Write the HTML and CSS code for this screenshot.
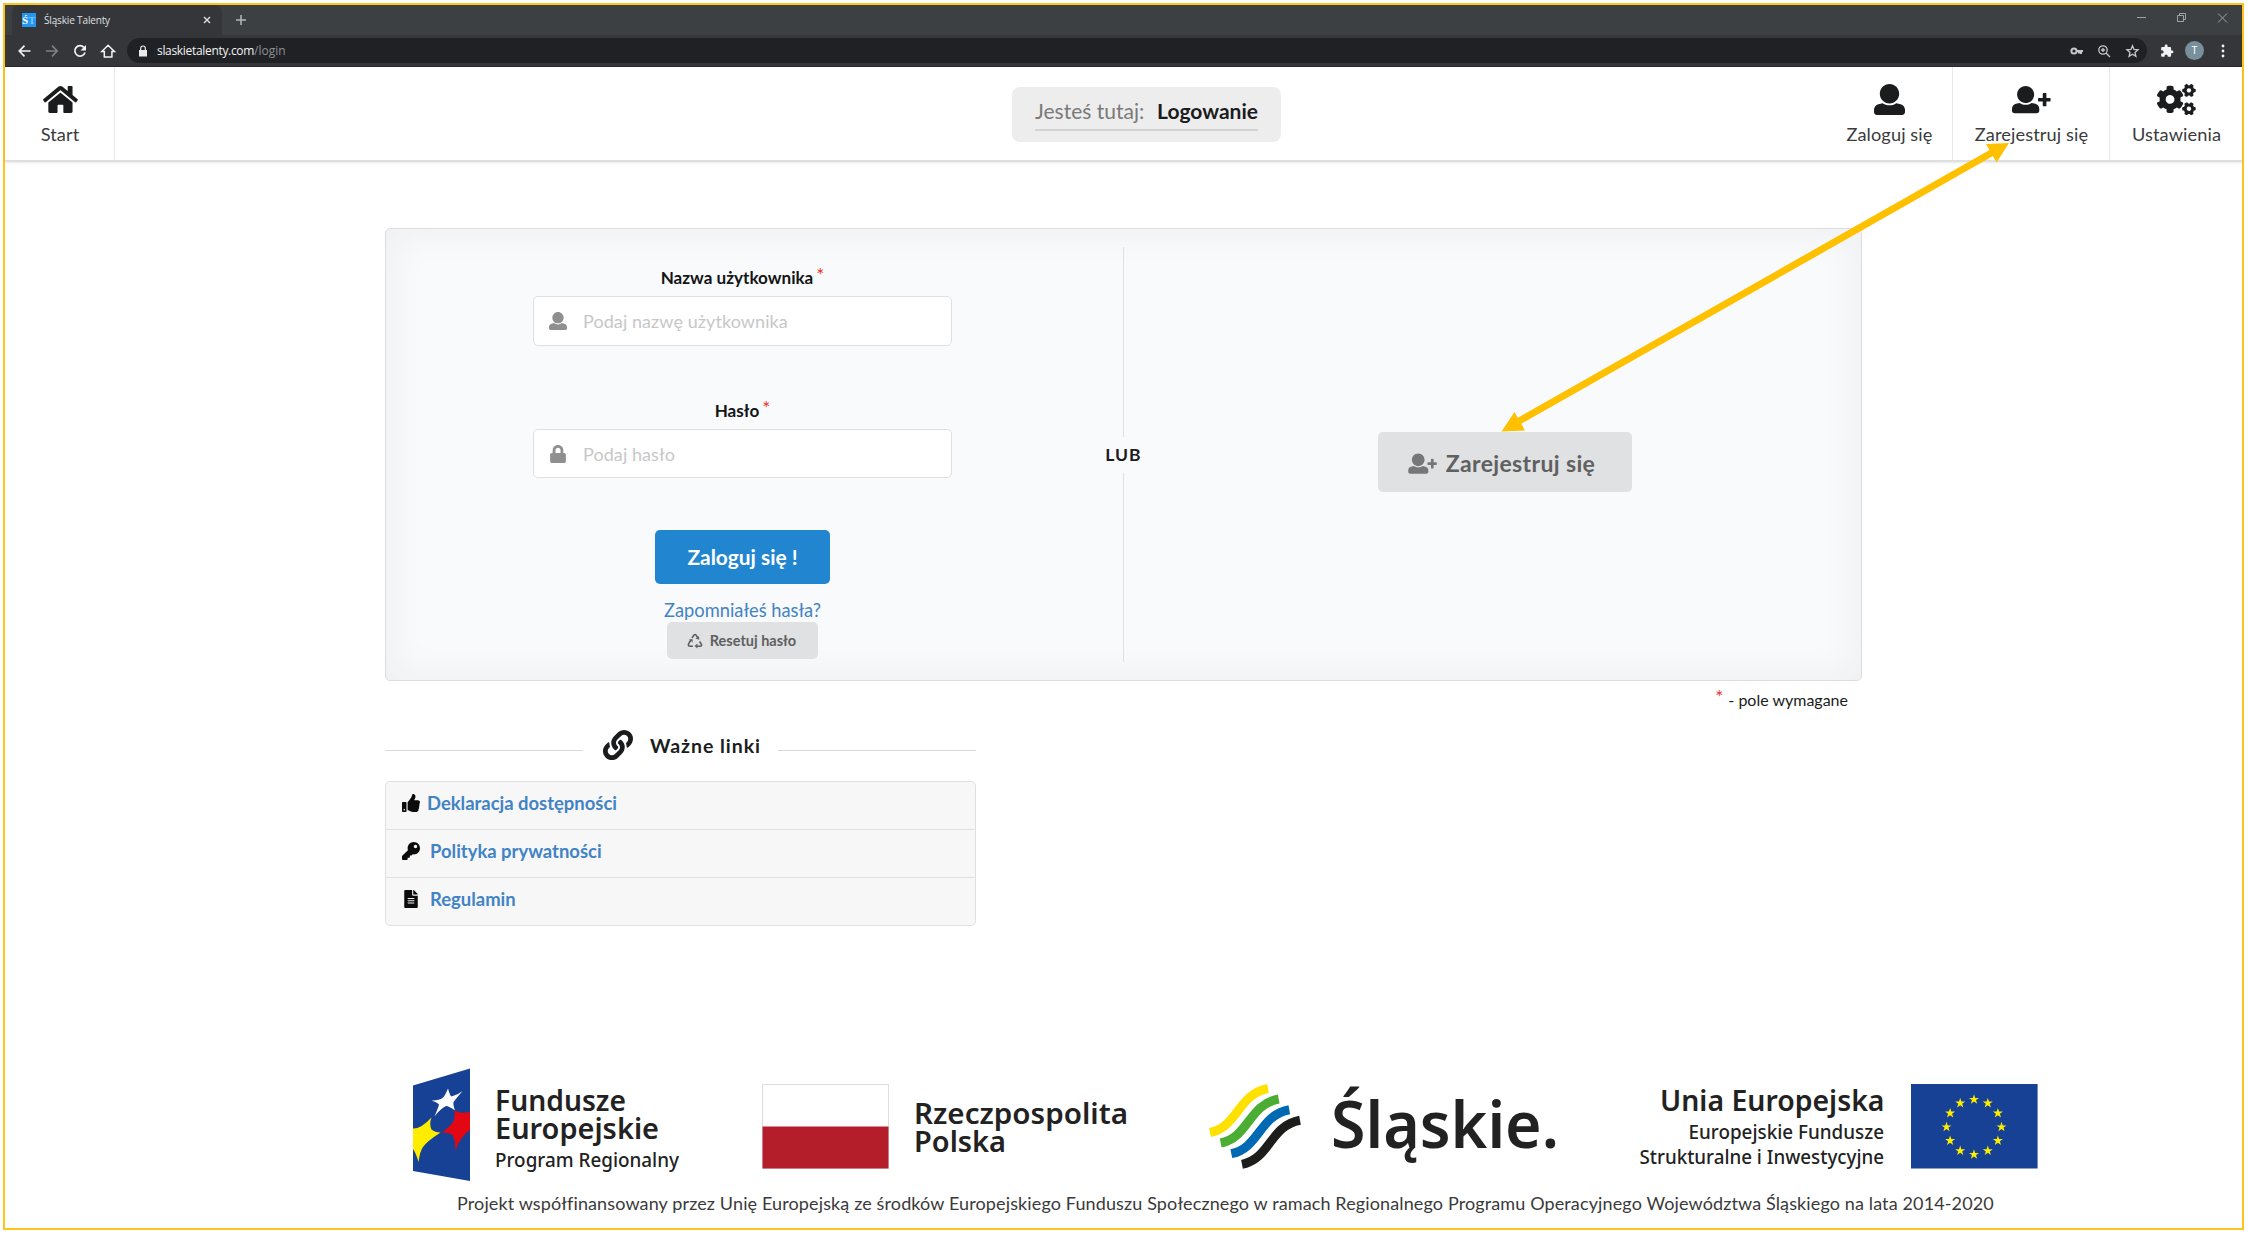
FILE: index.html
```html
<!DOCTYPE html>
<html lang="pl">
<head>
<meta charset="utf-8">
<title>Śląskie Talenty</title>
<link rel="stylesheet" href="styles.css">
</head>
<body>
<svg class="defs" width="0" height="0">
  <defs>
    <symbol id="user" viewBox="0 0 512 512"><path d="M256 0c88.366 0 160 71.634 160 160s-71.634 160-160 160S96 248.366 96 160 167.634 0 256 0zm183.283 333.821l-71.313-17.828c-74.923 53.89-165.738 41.864-223.94 0l-71.313 17.828C29.981 344.505 0 382.903 0 426.955V464c0 26.51 21.49 48 48 48h416c26.51 0 48-21.49 48-48v-37.045c0-44.052-29.981-82.45-72.717-93.134z"/></symbol>
    <symbol id="user-plus" viewBox="0 0 640 512"><path transform="translate(0 34) scale(.88)" d="M256 0c88.366 0 160 71.634 160 160s-71.634 160-160 160S96 248.366 96 160 167.634 0 256 0zm183.283 333.821l-71.313-17.828c-74.923 53.89-165.738 41.864-223.94 0l-71.313 17.828C29.981 344.505 0 382.903 0 426.955V464c0 26.51 21.49 48 48 48h416c26.51 0 48-21.49 48-48v-37.045c0-44.052-29.981-82.45-72.717-93.134z"/><path d="M508 160q0-10 10-10h40q10 0 10 10v70h62q10 0 10 10v38q0 10-10 10h-62v70q0 10-10 10h-40q-10 0-10-10v-70h-68q-10 0-10-10v-38q0-10 10-10h68z"/></symbol>
    <path id="small-cog" d="M512.1 191l-8.2 14.3c-3 5.3-9.4 7.5-15.1 5.4-11.8-4.4-22.6-10.7-32.1-18.6-4.6-3.8-5.8-10.5-2.8-15.7l8.2-14.3c-6.9-8-12.3-17.3-15.9-27.4h-16.5c-6 0-11.2-4.3-12.2-10.3-2-12-2.1-24.6 0-37.1 1-6 6.2-10.4 12.2-10.4h16.5c3.6-10.1 9-19.4 15.9-27.4l-8.2-14.3c-3-5.2-1.9-11.9 2.8-15.7 9.5-7.9 20.4-14.2 32.1-18.6 5.7-2.1 12.1.1 15.1 5.4l8.2 14.3c10.5-1.9 21.2-1.9 31.7 0L552 6.3c3-5.3 9.4-7.5 15.1-5.4 11.8 4.4 22.6 10.7 32.1 18.6 4.6 3.8 5.8 10.5 2.8 15.7l-8.2 14.3c6.9 8 12.3 17.3 15.9 27.4h16.5c6 0 11.2 4.3 12.2 10.3 2 12 2.1 24.6 0 37.1-1 6-6.2 10.4-12.2 10.4h-16.5c-3.6 10.1-9 19.4-15.9 27.4l8.2 14.3c3 5.2 1.9 11.9-2.8 15.7-9.5 7.9-20.4 14.2-32.1 18.6-5.7 2.1-12.1-.1-15.1-5.4l-8.2-14.3c-10.4 1.9-21.2 1.9-31.7 0zm-10.5-58.8c38.5 29.6 82.4-14.3 52.8-52.8-38.5-29.7-82.4 14.3-52.8 52.8z"/>
    <path id="star" d="M0-5.200 1.200-1.600H5L2 .6 3.100 4.200 0 2-3.100 4.200-2 .6-5-1.600H-1.200z"/>
  </defs>
</svg>

<div class="window">
  <div class="tabstrip">
    <div class="tab">
      <span class="favicon">Ś<span class="favicon-t">T</span></span>
      <span class="tab-title">Śląskie Talenty</span>
      <svg class="tab-close" viewBox="0 0 8 8"><path d="M1 1l6 6M7 1L1 7"/></svg>
    </div>
    <svg class="new-tab" viewBox="0 0 12 12"><path d="M6 1v10M1 6h10"/></svg>
    <svg class="win-btns" viewBox="0 0 92 12"><path d="M1 5.500h9M41.500 3.500h6v6h-6zM43.500 3.500v-2h6v6h-2M82 1.500l9 9M91 1.500l-9 9"/></svg>
  </div>

  <div class="toolbar">
    <svg class="nav-icons" viewBox="0 0 100 16">
      <g fill="none" stroke="#f1f3f4" stroke-width="1.700">
        <path d="M13.500 8H2.500M7.500 2.700L2.300 8l5.200 5.300"/>
        <path stroke="#7d8084" d="M29 8h11M35 2.700L40.200 8 35 13.300"/>
        <path d="M67 4.500A5.200 5.200 0 1 0 68 9.500"/>
        <path d="M84.800 8.500h2.500v5.500h7.600V8.500h2.500L91.100 2.300z" stroke-width="1.500"/>
      </g>
      <path fill="#f1f3f4" d="M69 2v5.500h-5.500z"/>
    </svg>
    <div class="omnibox">
      <svg class="url-lock" viewBox="0 0 10 12"><path d="M1 5h8v6.500H1z" fill="#e8eaed"/><path d="M2.700 5V3.300a2.300 2.300 0 0 1 4.600 0V5" fill="none" stroke="#e8eaed" stroke-width="1.200"/></svg>
      <span class="url"><b>slaskietalenty.com</b><span>/login</span></span>
      <svg class="omni-icons" viewBox="0 0 70 14">
        <g fill="none" stroke="#c6c8cb" stroke-width="1.500">
          <circle cx="4" cy="7" r="2.600" stroke-width="2"/><path d="M6.500 7H13M11 7v3M9 7v2.500" stroke-width="2"/>
          <circle cx="33" cy="6" r="4.200" stroke-width="1.300"/><path d="M36 9l4 4M31 6h4M33 4v4" stroke-width="1.300"/>
          <path stroke-width="1.300" d="M62.500 1.800l1.500 3.700 4 .3-3 2.600.9 3.900-3.400-2.100-3.400 2.100.9-3.900-3-2.600 4-.3z"/>
        </g>
      </svg>
    </div>
    <svg class="puzzle" viewBox="0 0 24 24"><path d="M20.500 11H19V7c0-1.100-.9-2-2-2h-4V3.500a2.500 2.500 0 0 0-5 0V5H4c-1.100 0-2 .9-2 2v3.800h1.500a2.700 2.700 0 0 1 0 5.400H2V20c0 1.100.9 2 2 2h3.800v-1.500a2.700 2.700 0 0 1 5.400 0V22H17c1.100 0 2-.9 2-2v-4h1.500a2.500 2.500 0 0 0 0-5z"/></svg>
    <span class="avatar">T</span>
    <svg class="dots" viewBox="0 0 4 14"><circle cx="2" cy="2" r="1.400"/><circle cx="2" cy="7" r="1.400"/><circle cx="2" cy="12" r="1.400"/></svg>
  </div>

  <header class="nav">
    <a class="nav-item nav-start">
      <svg class="icon" viewBox="0 0 576 512"><path d="M488 312.700V456c0 13.300-10.700 24-24 24H348c-6.600 0-12-5.400-12-12V356c0-6.600-5.400-12-12-12h-72c-6.600 0-12 5.400-12 12v112c0 6.600-5.400 12-12 12H112c-13.300 0-24-10.700-24-24V312.700c0-3.600 1.600-7 4.400-9.300l188-154.800c4.400-3.600 10.800-3.600 15.300 0l188 154.800c2.700 2.300 4.300 5.700 4.300 9.300zm83.600-60.900L488 182.900V44.400c0-6.600-5.400-12-12-12h-56c-6.600 0-12 5.400-12 12V117l-89.500-73.700c-17.700-14.600-43.300-14.600-61 0L4.400 251.800c-5.100 4.200-5.800 11.800-1.600 16.900l25.500 31c4.200 5.100 11.800 5.800 16.900 1.600l235.200-193.700c4.400-3.600 10.800-3.600 15.300 0l235.200 193.700c5.100 4.200 12.700 3.500 16.900-1.600l25.500-31c4.200-5.200 3.400-12.700-1.700-16.900z"/></svg>
      <span>Start</span>
    </a>
    <div class="crumb"><div class="crumb-line"><span class="crumb-label">Jesteś tutaj:</span><strong>Logowanie</strong></div></div>
    <a class="nav-item nav-login"><svg class="icon" viewBox="0 0 512 512"><use href="#user"/></svg><span>Zaloguj się</span></a>
    <a class="nav-item nav-register"><svg class="icon" viewBox="0 0 640 512"><use href="#user-plus"/></svg><span>Zarejestruj się</span></a>
    <a class="nav-item nav-settings">
      <svg class="icon" viewBox="0 0 640 512"><use href="#small-cog"/><use href="#small-cog" y="303"/><path d="M386.300 286.100l33.700 16.800c10.100 5.800 14.500 18.100 10.500 29.100-8.900 24.200-26.400 46.400-42.600 65.800-7.400 8.900-20.200 11.100-30.300 5.300l-29.100-16.800c-16 13.700-34.600 24.600-54.900 31.700v33.600c0 11.600-8.300 21.600-19.700 23.600-24.600 4.200-50.400 4.400-75.900 0-11.500-2-20-11.900-20-23.600V418c-20.300-7.200-38.900-18-54.900-31.700L74 403c-10 5.800-22.900 3.600-30.300-5.300-16.200-19.400-33.300-41.600-42.200-65.700-4-10.900.4-23.200 10.500-29.100l33.300-16.800c-3.900-20.900-3.900-42.400 0-63.400L12 205.800c-10.100-5.800-14.600-18.100-10.500-29 8.900-24.200 26-46.400 42.200-65.800 7.400-8.900 20.200-11.100 30.300-5.300l29.100 16.800c16-13.700 34.600-24.600 54.900-31.700V57.100c0-11.500 8.200-21.500 19.600-23.500 24.600-4.200 50.500-4.400 76-.1 11.500 2 20 11.900 20 23.600v33.600c20.300 7.200 38.900 18 54.900 31.700l29.100-16.800c10-5.800 22.900-3.600 30.300 5.300 16.200 19.400 33.200 41.600 42.100 65.800 4 10.900.1 23.200-10 29.100l-33.700 16.800c3.900 21 3.900 42.500 0 63.500zm-117.600 21.100c59.200-77-28.700-164.900-105.700-105.700-59.200 77 28.700 164.900 105.700 105.700z"/></svg>
      <span>Ustawienia</span>
    </a>
  </header>

  <main class="content">
    <section class="panel">
      <form class="login">
        <div class="label"><span>Nazwa użytkownika</span><i>*</i></div>
        <div class="input"><svg viewBox="0 0 512 512"><use href="#user"/></svg><span>Podaj nazwę użytkownika</span></div>
        <div class="label label-pass"><span>Hasło</span><i>*</i></div>
        <div class="input input-pass"><svg viewBox="-32 0 512 512"><path d="M400 224h-24v-72C376 68.200 307.800 0 224 0S72 68.200 72 152v72H48c-26.500 0-48 21.500-48 48v192c0 26.500 21.500 48 48 48h352c26.500 0 48-21.500 48-48V272c0-26.500-21.500-48-48-48zm-104 0H152v-72c0-39.700 32.300-72 72-72s72 32.300 72 72v72z"/></svg><span>Podaj hasło</span></div>
        <div class="btn btn-login"><span>Zaloguj się !</span></div>
        <a class="forgot">Zapomniałeś hasła?</a>
        <div class="btn btn-reset">
          <svg viewBox="0 0 16 16"><g fill="none" stroke="currentColor" stroke-width="1.600"><path d="M5 5L7 2Q8 .9 9 2l2 3.200M3.800 7L1.500 11Q.9 13 3 13.200h3M12.600 8.500L14.500 11.500Q15 13.200 13 13.200H9"/></g><path fill="currentColor" d="M12.300 6.800L8.500 5.500l3.500-2.300zM2 6.500l3.400-.6.500 3.600zM10.500 10.600v5l-3-2.500z"/></svg>
          <span>Resetuj hasło</span>
        </div>
      </form>
      <div class="or"><span>LUB</span></div>
      <div class="signup">
        <div class="btn btn-register"><svg viewBox="0 0 640 512"><use href="#user-plus"/></svg><span>Zarejestruj się</span></div>
      </div>
    </section>
    <p class="required"><i>*</i><span>- pole wymagane</span></p>

    <section class="links">
      <h4 class="links-title">
        <svg viewBox="0 0 512 512"><path d="M326.612 185.391c59.747 59.809 58.927 155.698.36 214.590-.11.12-.24.25-.36.37l-67.200 67.200c-59.270 59.270-155.699 59.262-214.960 0-59.270-59.260-59.270-155.700 0-214.960l37.106-37.106c9.840-9.840 26.786-3.300 27.294 10.606.648 17.722 3.826 35.527 9.690 52.721 1.986 5.822.567 12.262-3.783 16.612l-13.087 13.087c-28.026 28.026-28.905 73.660-1.155 101.960 28.024 28.579 74.086 28.749 102.325.51l67.200-67.190c28.191-28.191 28.073-73.757 0-101.830-3.701-3.694-7.429-6.564-10.341-8.569a16.037 16.037 0 0 1-6.947-12.606c-.396-10.567 3.348-21.456 11.698-29.806l21.054-21.055c5.521-5.521 14.182-6.199 20.584-1.731a152.482 152.482 0 0 1 20.522 17.197zM467.547 44.449c-59.261-59.262-155.690-59.270-214.960 0l-67.200 67.200c-.12.12-.25.25-.36.37-58.566 58.892-59.387 154.781.36 214.590a152.454 152.454 0 0 0 20.521 17.196c6.402 4.468 15.064 3.789 20.584-1.731l21.054-21.055c8.350-8.350 12.094-19.239 11.698-29.806a16.037 16.037 0 0 0-6.947-12.606c-2.912-2.005-6.640-4.875-10.341-8.569-28.073-28.073-28.191-73.639 0-101.830l67.200-67.190c28.239-28.239 74.300-28.069 102.325.51 27.750 28.300 26.872 73.934-1.155 101.960l-13.087 13.087c-4.350 4.350-5.769 10.790-3.783 16.612 5.864 17.194 9.042 34.999 9.690 52.721.509 13.906 17.454 20.446 27.294 10.606l37.106-37.106c59.271-59.259 59.271-155.699.001-214.959z"/></svg>
        <span>Ważne linki</span>
      </h4>
      <nav class="menu">
        <a class="menu-row tight"><svg viewBox="0 0 512 512"><path d="M104 224H24c-13.255 0-24 10.745-24 24v240c0 13.255 10.745 24 24 24h80c13.255 0 24-10.745 24-24V248c0-13.255-10.745-24-24-24zM64 472c-13.255 0-24-10.745-24-24s10.745-24 24-24 24 10.745 24 24-10.745 24-24 24zM384 81.452c0 42.416-25.970 66.208-33.277 94.548h101.723c33.397 0 59.397 27.746 59.553 58.098.084 17.938-7.546 37.249-19.439 49.197l-.11.11c9.836 23.337 8.237 56.037-9.308 79.469 8.681 25.895-.069 57.704-16.382 74.757 4.298 17.598 2.244 32.575-6.148 44.632C440.202 511.587 389.616 512 346.839 512l-2.845-.001c-48.287-.017-87.806-17.598-119.560-31.725-15.957-7.099-36.821-15.887-52.651-16.178-6.540-.12-11.783-5.457-11.783-11.998v-213.770c0-3.200 1.282-6.271 3.558-8.521 39.614-39.144 56.648-80.587 89.117-113.111 14.804-14.832 20.188-37.236 25.393-58.902C282.515 39.293 291.817 0 312 0c24 0 72 8 72 81.452z"/></svg><span>Deklaracja dostępności</span></a>
        <a class="menu-row"><svg viewBox="0 0 512 512"><path d="M512 176.001C512 273.203 433.202 352 336 352c-11.220 0-22.190-1.062-32.827-3.069l-24.012 27.014A23.999 23.999 0 0 1 261.223 384H224v40c0 13.255-10.745 24-24 24h-40v40c0 13.255-10.745 24-24 24H24c-13.255 0-24-10.745-24-24v-78.059c0-6.365 2.529-12.470 7.029-16.971l161.802-161.802C163.108 213.814 160 195.271 160 176 160 78.798 238.797.001 335.999 0 433.488-.001 512 78.511 512 176.001zM336 128c0 26.510 21.490 48 48 48s48-21.490 48-48-21.490-48-48-48-48 21.490-48 48z"/></svg><span>Polityka prywatności</span></a>
        <a class="menu-row"><svg viewBox="-64 0 512 512"><path d="M224 136V0H24C10.700 0 0 10.700 0 24v464c0 13.300 10.700 24 24 24h336c13.300 0 24-10.700 24-24V160H248c-13.200 0-24-10.800-24-24zm64 236c0 6.600-5.400 12-12 12H108c-6.600 0-12-5.400-12-12v-8c0-6.600 5.400-12 12-12h168c6.600 0 12 5.400 12 12v8zm0-64c0 6.600-5.400 12-12 12H108c-6.600 0-12-5.400-12-12v-8c0-6.600 5.400-12 12-12h168c6.600 0 12 5.400 12 12v8zm0-72v8c0 6.600-5.400 12-12 12H108c-6.600 0-12-5.400-12-12v-8c0-6.600 5.400-12 12-12h168c6.600 0 12 5.400 12 12zm96-114.100v6.100H256V0h6.100c6.400 0 12.500 2.500 17 7l97.900 98c4.500 4.500 7 10.600 7 16.900z"/></svg><span>Regulamin</span></a>
      </nav>
    </section>
  </main>

  <footer>
    <div class="logos">
      <svg class="logo-fe" width="270" height="114" viewBox="413 1068 270 114">
        <path fill="#164194" d="M413 1085.500L470 1068.500V1181L413 1171z"/>
        <path fill="#fff" d="M448 1088.500Q450 1096 451.500 1096.500Q458 1095 462.500 1091Q455 1100 453.500 1102Q453 1105 455 1110.500Q449 1106 446 1106Q440 1109 434.500 1116.500Q438.500 1107 439 1104.500Q437.500 1102.500 431.500 1100.800Q440 1100 442.500 1098Q445 1096 448 1088.500z"/>
        <path fill="#ffed00" d="M413 1128.500Q421 1129 431.500 1117.500Q429 1124 431.500 1129.500Q435 1132.500 440.500 1132.500Q426 1142 423 1147Q420 1151 418.500 1162Q416 1153 413 1149z"/>
        <path fill="#e30613" d="M470 1112Q459 1114 454.500 1110Q455 1119 453 1122Q448 1129 441 1132.500Q448 1132 452 1134.500Q455.500 1139 455.500 1151Q459 1138 470 1130z"/>
        <g class="logo-text"><text class="b" x="495" y="1111" font-size="28.500" textLength="131" lengthAdjust="spacingAndGlyphs">Fundusze</text><text class="b" x="495" y="1139" font-size="28.500" textLength="164" lengthAdjust="spacingAndGlyphs">Europejskie</text><text class="m" x="495" y="1167" font-size="19.500" textLength="184" lengthAdjust="spacingAndGlyphs">Program Regionalny</text></g>
      </svg>
      <svg class="logo-pl" width="370" height="86" viewBox="761 1084 370 86">
        <path fill="#fff" stroke="#dcdcdc" d="M762.500 1084.500h126v84h-126z"/><path fill="#b41e2a" d="M762.500 1126.500h126v42h-126z"/>
        <g class="logo-text"><text class="b" x="914" y="1124" font-size="28.500" textLength="214" lengthAdjust="spacingAndGlyphs">Rzeczpospolita</text><text class="b" x="914" y="1152" font-size="28.500" textLength="92" lengthAdjust="spacingAndGlyphs">Polska</text></g>
      </svg>
      <svg class="logo-sl" width="350" height="90" viewBox="1209 1082 350 90">
        <g fill="none" stroke-width="9"><path stroke="#ffe100" d="M1210 1132.500C1238 1127 1238 1094 1268 1088.500"/><path stroke="#4bad33" d="M1220.700 1143C1248.700 1137.500 1248.700 1104.500 1278.700 1099"/><path stroke="#0069b4" d="M1231.300 1153.700C1259.300 1148.200 1259.300 1115.200 1289.300 1109.700"/><path stroke="#1d1d1b" d="M1242 1164.300C1270 1158.800 1270 1125.800 1300 1120.300"/></g>
        <g class="logo-text"><text class="b" x="1331" y="1147.500" font-size="65" textLength="228" lengthAdjust="spacingAndGlyphs">Śląskie.</text></g>
      </svg>
      <svg class="logo-ue" width="400" height="86" viewBox="1638 1084 400 86">
        <g class="logo-text"><text class="b" x="1660" y="1111" font-size="28.500" textLength="224.500" lengthAdjust="spacingAndGlyphs">Unia Europejska</text><text class="m" x="1688.500" y="1139" font-size="19.500" textLength="195.500" lengthAdjust="spacingAndGlyphs">Europejskie Fundusze</text><text class="m" x="1639.500" y="1164" font-size="19.500" textLength="244.500" lengthAdjust="spacingAndGlyphs">Strukturalne i Inwestycyjne</text></g>
        <path fill="#164194" d="M1911 1084h126.600v84.500H1911z"/>
        <g fill="#ffed00"><use href="#star" x="1974" y="1099.500"/><use href="#star" x="1987.800" y="1103.200"/><use href="#star" x="1997.900" y="1113.200"/><use href="#star" x="2001.500" y="1127"/><use href="#star" x="1997.900" y="1140.700"/><use href="#star" x="1987.800" y="1150.800"/><use href="#star" x="1974" y="1154.500"/><use href="#star" x="1960.200" y="1150.800"/><use href="#star" x="1950.100" y="1140.700"/><use href="#star" x="1946.500" y="1127"/><use href="#star" x="1950.100" y="1113.200"/><use href="#star" x="1960.200" y="1103.200"/></g>
      </svg>
    </div>
    <p class="project"><span>Projekt współfinansowany przez Unię Europejską ze środków Europejskiego Funduszu Społecznego w ramach Regionalnego Programu Operacyjnego Województwa Śląskiego na lata 2014-2020</span></p>
  </footer>
</div>

<svg class="arrow" width="520" height="300" viewBox="1495 138 520 300"><path fill="none" stroke="#ffc000" stroke-width="7" d="M1517 422.200L1993.500 151.800"/><path fill="#ffc000" d="M1501.500 431.500L1514.500 412 1525 430.500zM2009 143L1986 144 1996.600 162.500z"/></svg>
</body>
</html>
```
FILE: styles.css
```css
* { box-sizing: border-box; }
body { margin: 0; background: #fff; font-family: Lato, sans-serif; font-size: 18px; line-height: 24px; color: #1b1c1d; }
svg { display: block; flex: none; overflow: visible; }
p, h4 { margin: 0; }
i { font-style: normal; }
span, strong, a, b { white-space: nowrap; }
.defs { position: absolute; }

.window { width: 2241px; height: 1227px; margin: 3px 0 0 3px; border: 2px solid #ffc31a; background: #fff; display: flex; flex-direction: column; }

.tabstrip { height: 30px; background: #3d4043; display: flex; align-items: center; font-family: "Open Sans", sans-serif; }
.tab { width: 210px; height: 30px; margin-left: 7px; padding: 0 11px 0 10px; background: #35363a; border-radius: 7px 7px 0 0; display: flex; align-items: center; }
.favicon { width: 14px; height: 14px; background: #2196f3; color: #fff; font: bold 11px/14px "Liberation Serif", serif; }
.favicon-t { color: #7cc4fb; }
.tab-title { margin-left: 8px; font-size: 10px; letter-spacing: -.15px; color: #dfe1e5; flex: 1; }
.tab-close { width: 8px; height: 8px; fill: none; stroke: #dfe1e5; stroke-width: 1.4; }
.new-tab { width: 12px; height: 12px; margin-left: 13px; fill: none; stroke: #b5b8bb; stroke-width: 1.5; }
.win-btns { width: 92px; height: 12px; margin: 0 14px 5px auto; fill: none; stroke: #a0a3a5; stroke-width: 1; }

.toolbar { height: 32px; background: #35363a; border-bottom: 1px solid #292a2d; display: flex; align-items: center; }
.nav-icons { width: 100px; height: 16px; margin-left: 12px; }
.omnibox { width: 2020px; height: 25px; margin-left: 10px; padding: 0 7px 0 11px; border-radius: 13px; background: #202124; display: flex; align-items: center; font-family: "Open Sans", sans-serif; font-size: 12px; color: #8d9195; }
.url-lock { width: 10px; height: 12px; }
.url { margin-left: 9px; flex: 1; line-height: 22px; }
.url b { font-weight: normal; letter-spacing: -.32px; color: #f1f3f4; }
.omni-icons { width: 70px; height: 14px; }
.puzzle { width: 14px; height: 14px; margin-left: 13px; fill: #f1f3f4; }
.avatar { width: 19px; height: 19px; margin-left: 11px; border-radius: 50%; background: #78909c; color: #fff; font: 10px/19px Roboto, sans-serif; text-align: center; }
.dots { width: 4px; height: 14px; margin-left: 17px; fill: #f1f3f4; }

.nav { height: 95px; border-bottom: 2px solid #dedfdf; box-shadow: 0 1px 2px rgba(34,36,38,.1); display: flex; }
.nav-item { display: flex; flex-direction: column; align-items: center; padding: 17px 0 0 1px; color: #3a3b3c; font-size: 18.2px; letter-spacing: .1px; }
.nav-item .icon { height: 31px; margin-bottom: 7px; fill: #1b1c1d; }
.nav-start { width: 110px; border-right: 1px solid #e8e8e9; }
.nav-login { width: 127px; margin-left: auto; border-right: 1px solid #e8e8e9; }
.nav-register { width: 157px; border-right: 1px solid #e8e8e9; }
.nav-settings { width: 132px; }
.crumb { width: 269px; height: 55px; margin: 20px 0 0 897px; padding: 11px 23px 0; border-radius: 8px; background: #ededed; }
.crumb-line { height: 33px; border-bottom: 2px solid #d3d3d3; display: flex; justify-content: space-between; align-items: baseline; font-size: 21px; line-height: 26px; }
.crumb-label { color: #7a7a7a; }

.content { padding: 66px 380px 0; }
.panel { width: 1477px; height: 453px; border: 1px solid #dcdddf; border-radius: 5px; background: #f9fafc; box-shadow: inset 0 0 40px rgba(34,36,38,.06); display: grid; grid-template-columns: 1fr 49px 1fr; }
.login { display: flex; flex-direction: column; align-items: center; padding-top: 37px; }
.label { display: flex; gap: 3px; font-weight: bold; font-size: 17.1px; margin-bottom: 6px; color: #141516; }
.label i, .required i { color: #e8352c; font-weight: normal; font-size: 19px; position: relative; top: -3px; }
.label-pass { margin-top: 53px; }
.input { width: 419px; height: 50px; padding-left: 15px; border: 1px solid #dfe0e1; border-radius: 5px; background: #fff; display: flex; align-items: center; gap: 16px; color: #c7c7c8; letter-spacing: .08px; }
.input svg { width: 18px; height: 18px; fill: #8f8f90; }
.input-pass { height: 49px; }
.btn { border-radius: 5px; background: #e0e1e2; color: #5f6061; font-weight: bold; display: flex; align-items: center; justify-content: center; }
.btn svg { fill: #767778; }
.btn-login { width: 175px; height: 54px; margin-top: 52px; background: #2185d0; color: #fff; font-size: 20.9px; }
.forgot { margin-top: 14px; color: #4183c4; font-size: 18.3px; }
.btn-reset { width: 151px; height: 37px; padding-right: 2px; font-size: 14.5px; gap: 7px; }
.btn-reset svg { width: 16px; height: 16px; }
.or { display: flex; flex-direction: column; align-items: center; padding: 18px 0; font-weight: bold; font-size: 17.500px; letter-spacing: 1px; gap: 6px; }
.or::before, .or::after { content: ""; flex: 1; width: 1px; background: #dfe0e2; }
.signup { display: flex; justify-content: center; padding-top: 203px; }
.btn-register { width: 254px; height: 60px; padding: 2px 6px 0 0; font-size: 23px; letter-spacing: .36px; gap: 9px; }
.btn-register svg { width: 29px; height: 23px; }
.required { width: 1463px; margin-top: 7px; display: flex; justify-content: flex-end; gap: 5px; font-size: 16px; }

.links { width: 591px; margin-top: 18px; }
.links-title { height: 30px; display: flex; align-items: center; font-size: 19.5px; letter-spacing: .95px; }
.links-title::before, .links-title::after { content: ""; flex: 1; height: 1px; margin-top: 10px; background: #d8d9da; }
.links-title svg { width: 30px; height: 30px; margin: 0 17px 0 20px; fill: #1b1c1d; }
.links-title span { margin: 2px 17px 0 0; }
.menu { margin-top: 21px; border: 1px solid #dfe0e0; border-radius: 5px; background: #f7f7f7; }
.menu-row { height: 48px; padding: 0 16px 5px; border-bottom: 1px solid #dfe0e0; display: flex; align-items: center; gap: 10px; color: #4183c4; font-weight: bold; font-size: 18.45px; }
.menu-row:last-child { border-bottom: 0; height: 47px; }
.menu-row.tight { gap: 7px; }
.menu-row svg { width: 18px; height: 18px; fill: #0b0b0b; }

.logos { height: 114px; margin: 142px 0 0 408px; display: flex; align-items: flex-start; }
.logo-pl { margin: 16px 0 0 78px; }
.logo-sl { margin: 14px 0 0 78px; }
.logo-ue { margin: 16px 0 0 79px; }
.logo-text { font-family: "Noto Sans", sans-serif; fill: #222; }
.b { font-weight: 650; }
.m { font-weight: 500; }
.project { width: 1536px; margin: 9px 0 0 452px; letter-spacing: .124px; color: #3a3a3a; }

.arrow { position: absolute; left: 1495px; top: 138px; }
```
